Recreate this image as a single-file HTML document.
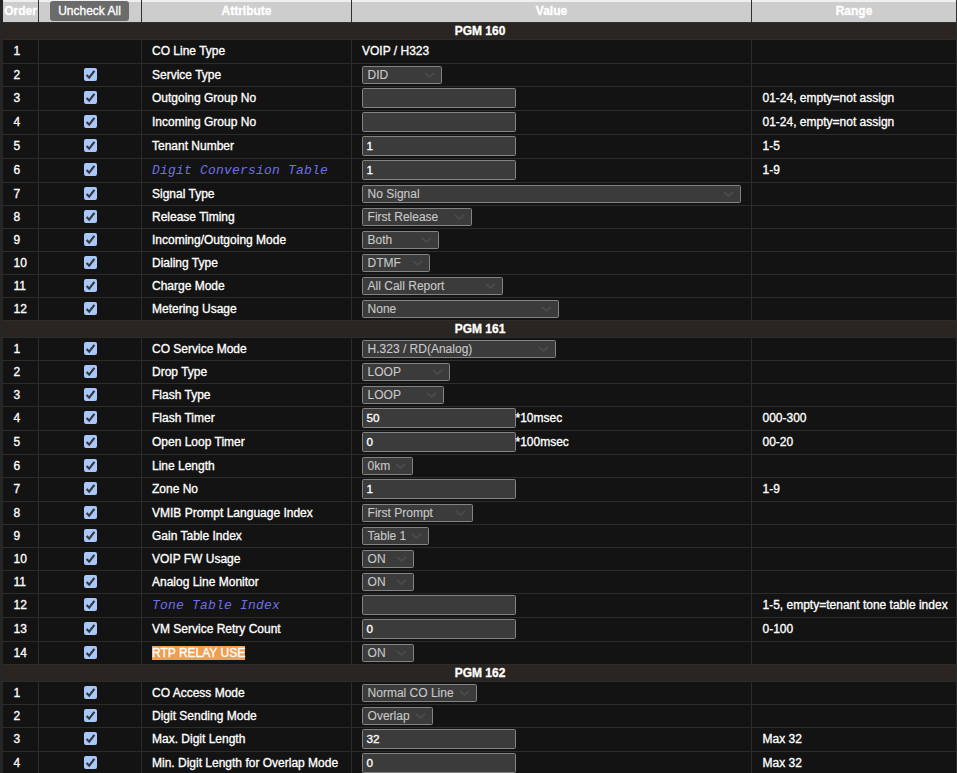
<!DOCTYPE html>
<html><head><meta charset="utf-8"><title>PGM</title>
<style>
html,body{margin:0;padding:0;background:#262626;}
body{width:957px;height:773px;overflow:hidden;position:relative;font-family:"Liberation Sans",sans-serif;font-size:12px;color:#fff;}
table{position:absolute;left:3px;top:0;width:953px;border-collapse:collapse;table-layout:fixed;}
td,th{border:1px solid #2c2c2c;padding:0;overflow:hidden;white-space:nowrap;}
thead th{background:#cdcdcd;color:#fff;font-weight:bold;font-size:12px;height:21px;border-color:#303030;border-top:1px solid #f0f0f0;box-shadow:inset 0 1px 0 #f0f0f0;text-align:center;}
tr.sec td{background:#2a2520;height:16px;text-align:center;font-weight:bold;font-size:12px;border-color:#2c2c2c;line-height:16px;}
tbody td{background:#131313;}
td.o{padding-left:9.5px;}
td.c{text-align:center;}
td.a{padding-left:10px;}
td.v{padding-left:10px;}
td.g{padding-left:10.5px;}
.cb{display:inline-block;width:13px;height:13px;background:#a8c7fa;border-radius:2px;vertical-align:middle;position:relative;top:-1px;}
.cb svg{display:block;}
.btn{display:inline-block;background:#6b6b6b;color:#fff;border-radius:3px;width:79px;height:20px;line-height:20px;position:relative;top:-1px;left:-0.5px;font-size:12px;font-weight:normal;text-align:center;vertical-align:middle;}
.sel{display:inline-block;box-sizing:border-box;height:18px;border:1px solid #838383;border-radius:1.5px;background:#3b3b3b;color:#c8c8c8;vertical-align:middle;position:relative;line-height:16px;font-size:12px;}
.sel .st{padding-left:4.6px;}
.sel .chev{position:absolute;right:6px;top:5px;}
.inp{display:inline-block;box-sizing:border-box;width:154px;height:20px;border:1px solid #838383;border-radius:1.5px;background:#3b3b3b;color:#fff;vertical-align:middle;line-height:18px;padding-left:3.6px;font-size:11.7px;}
.suf{vertical-align:middle;padding-left:1px;}
.lnk{font-family:"Liberation Mono",monospace;font-style:italic;color:#6f6fe8;font-size:13px;letter-spacing:0.2px;}
.hl{background:#f09e50;color:#fff;}
tr.rinp td, tr.rtext td{}
tr.rinp td > *, tr.rtext td > *{position:relative;top:-1px;}
tr.rinp td .cb, tr.rtext td .cb{top:-2px;}
tbody td, thead th{-webkit-text-stroke:0.32px #fff;}
.sel{-webkit-text-stroke:0.12px #c8c8c8;}
.lnk{-webkit-text-stroke:0;}
thead th span.ht{position:relative;top:-1px;}
thead th:first-child{border-left-color:#cdcdcd;}
tbody td:first-child{border-left-color:#131313;}
tr.sec td:first-child{border-left-color:#2a2520;}
thead th:first-child span.ht{left:-0.5px;}
tr.rinp td > .lnk{top:0px;}
.suf{padding-left:0;margin-left:-0.5px;}
</style></head><body>
<table>
<colgroup><col style="width:35px"><col style="width:103px"><col style="width:210px"><col style="width:400px"><col style="width:205px"></colgroup>
<thead><tr><th><span class="ht">Order</span></th><th><span class="btn">Uncheck All</span></th><th><span class="ht">Attribute</span></th><th><span class="ht">Value</span></th><th><span class="ht">Range</span></th></tr></thead>
<tbody>
<tr class="sec"><td colspan="5">PGM 160</td></tr>
<tr class="rtext" style="height:24px"><td class="o"><span>1</span></td><td class="c"></td><td class="a"><span>CO Line Type</span></td><td class="v"><span class="vt">VOIP / H323</span></td><td class="g"><span></span></td></tr>
<tr class="rsel" style="height:23px"><td class="o"><span>2</span></td><td class="c"><span class="cb"><svg viewBox="0 0 13 13" width="13" height="13"><path d="M2.6 7.0 L5.2 9.7 L10.4 2.8" fill="none" stroke="#363636" stroke-width="2.1"/></svg></span></td><td class="a"><span>Service Type</span></td><td class="v"><span class="sel" style="width:80px"><span class="st">DID</span><svg class="chev" viewBox="0 0 11 6" width="11" height="6"><path d="M1 1 L5.5 5 L10 1" fill="none" stroke="#4b4b4b" stroke-width="1.7"/></svg></span></td><td class="g"><span></span></td></tr>
<tr class="rinp" style="height:24px"><td class="o"><span>3</span></td><td class="c"><span class="cb"><svg viewBox="0 0 13 13" width="13" height="13"><path d="M2.6 7.0 L5.2 9.7 L10.4 2.8" fill="none" stroke="#363636" stroke-width="2.1"/></svg></span></td><td class="a"><span>Outgoing Group No</span></td><td class="v"><span class="inp"></span></td><td class="g"><span>01-24, empty=not assign</span></td></tr>
<tr class="rinp" style="height:24px"><td class="o"><span>4</span></td><td class="c"><span class="cb"><svg viewBox="0 0 13 13" width="13" height="13"><path d="M2.6 7.0 L5.2 9.7 L10.4 2.8" fill="none" stroke="#363636" stroke-width="2.1"/></svg></span></td><td class="a"><span>Incoming Group No</span></td><td class="v"><span class="inp"></span></td><td class="g"><span>01-24, empty=not assign</span></td></tr>
<tr class="rinp" style="height:24px"><td class="o"><span>5</span></td><td class="c"><span class="cb"><svg viewBox="0 0 13 13" width="13" height="13"><path d="M2.6 7.0 L5.2 9.7 L10.4 2.8" fill="none" stroke="#363636" stroke-width="2.1"/></svg></span></td><td class="a"><span>Tenant Number</span></td><td class="v"><span class="inp">1</span></td><td class="g"><span>1-5</span></td></tr>
<tr class="rinp" style="height:24px"><td class="o"><span>6</span></td><td class="c"><span class="cb"><svg viewBox="0 0 13 13" width="13" height="13"><path d="M2.6 7.0 L5.2 9.7 L10.4 2.8" fill="none" stroke="#363636" stroke-width="2.1"/></svg></span></td><td class="a"><span class="lnk">Digit Conversion Table</span></td><td class="v"><span class="inp">1</span></td><td class="g"><span>1-9</span></td></tr>
<tr class="rsel" style="height:23px"><td class="o"><span>7</span></td><td class="c"><span class="cb"><svg viewBox="0 0 13 13" width="13" height="13"><path d="M2.6 7.0 L5.2 9.7 L10.4 2.8" fill="none" stroke="#363636" stroke-width="2.1"/></svg></span></td><td class="a"><span>Signal Type</span></td><td class="v"><span class="sel" style="width:379px"><span class="st">No Signal</span><svg class="chev" viewBox="0 0 11 6" width="11" height="6"><path d="M1 1 L5.5 5 L10 1" fill="none" stroke="#4b4b4b" stroke-width="1.7"/></svg></span></td><td class="g"><span></span></td></tr>
<tr class="rsel" style="height:23px"><td class="o"><span>8</span></td><td class="c"><span class="cb"><svg viewBox="0 0 13 13" width="13" height="13"><path d="M2.6 7.0 L5.2 9.7 L10.4 2.8" fill="none" stroke="#363636" stroke-width="2.1"/></svg></span></td><td class="a"><span>Release Timing</span></td><td class="v"><span class="sel" style="width:110px"><span class="st">First Release</span><svg class="chev" viewBox="0 0 11 6" width="11" height="6"><path d="M1 1 L5.5 5 L10 1" fill="none" stroke="#4b4b4b" stroke-width="1.7"/></svg></span></td><td class="g"><span></span></td></tr>
<tr class="rsel" style="height:23px"><td class="o"><span>9</span></td><td class="c"><span class="cb"><svg viewBox="0 0 13 13" width="13" height="13"><path d="M2.6 7.0 L5.2 9.7 L10.4 2.8" fill="none" stroke="#363636" stroke-width="2.1"/></svg></span></td><td class="a"><span>Incoming/Outgoing Mode</span></td><td class="v"><span class="sel" style="width:77px"><span class="st">Both</span><svg class="chev" viewBox="0 0 11 6" width="11" height="6"><path d="M1 1 L5.5 5 L10 1" fill="none" stroke="#4b4b4b" stroke-width="1.7"/></svg></span></td><td class="g"><span></span></td></tr>
<tr class="rsel" style="height:23px"><td class="o"><span>10</span></td><td class="c"><span class="cb"><svg viewBox="0 0 13 13" width="13" height="13"><path d="M2.6 7.0 L5.2 9.7 L10.4 2.8" fill="none" stroke="#363636" stroke-width="2.1"/></svg></span></td><td class="a"><span>Dialing Type</span></td><td class="v"><span class="sel" style="width:68px"><span class="st">DTMF</span><svg class="chev" viewBox="0 0 11 6" width="11" height="6"><path d="M1 1 L5.5 5 L10 1" fill="none" stroke="#4b4b4b" stroke-width="1.7"/></svg></span></td><td class="g"><span></span></td></tr>
<tr class="rsel" style="height:23px"><td class="o"><span>11</span></td><td class="c"><span class="cb"><svg viewBox="0 0 13 13" width="13" height="13"><path d="M2.6 7.0 L5.2 9.7 L10.4 2.8" fill="none" stroke="#363636" stroke-width="2.1"/></svg></span></td><td class="a"><span>Charge Mode</span></td><td class="v"><span class="sel" style="width:141px"><span class="st">All Call Report</span><svg class="chev" viewBox="0 0 11 6" width="11" height="6"><path d="M1 1 L5.5 5 L10 1" fill="none" stroke="#4b4b4b" stroke-width="1.7"/></svg></span></td><td class="g"><span></span></td></tr>
<tr class="rsel" style="height:23px"><td class="o"><span>12</span></td><td class="c"><span class="cb"><svg viewBox="0 0 13 13" width="13" height="13"><path d="M2.6 7.0 L5.2 9.7 L10.4 2.8" fill="none" stroke="#363636" stroke-width="2.1"/></svg></span></td><td class="a"><span>Metering Usage</span></td><td class="v"><span class="sel" style="width:197px"><span class="st">None</span><svg class="chev" viewBox="0 0 11 6" width="11" height="6"><path d="M1 1 L5.5 5 L10 1" fill="none" stroke="#4b4b4b" stroke-width="1.7"/></svg></span></td><td class="g"><span></span></td></tr>
<tr class="sec"><td colspan="5">PGM 161</td></tr>
<tr class="rsel" style="height:23px"><td class="o"><span>1</span></td><td class="c"><span class="cb"><svg viewBox="0 0 13 13" width="13" height="13"><path d="M2.6 7.0 L5.2 9.7 L10.4 2.8" fill="none" stroke="#363636" stroke-width="2.1"/></svg></span></td><td class="a"><span>CO Service Mode</span></td><td class="v"><span class="sel" style="width:194px"><span class="st">H.323 / RD(Analog)</span><svg class="chev" viewBox="0 0 11 6" width="11" height="6"><path d="M1 1 L5.5 5 L10 1" fill="none" stroke="#4b4b4b" stroke-width="1.7"/></svg></span></td><td class="g"><span></span></td></tr>
<tr class="rsel" style="height:23px"><td class="o"><span>2</span></td><td class="c"><span class="cb"><svg viewBox="0 0 13 13" width="13" height="13"><path d="M2.6 7.0 L5.2 9.7 L10.4 2.8" fill="none" stroke="#363636" stroke-width="2.1"/></svg></span></td><td class="a"><span>Drop Type</span></td><td class="v"><span class="sel" style="width:88px"><span class="st">LOOP</span><svg class="chev" viewBox="0 0 11 6" width="11" height="6"><path d="M1 1 L5.5 5 L10 1" fill="none" stroke="#4b4b4b" stroke-width="1.7"/></svg></span></td><td class="g"><span></span></td></tr>
<tr class="rsel" style="height:23px"><td class="o"><span>3</span></td><td class="c"><span class="cb"><svg viewBox="0 0 13 13" width="13" height="13"><path d="M2.6 7.0 L5.2 9.7 L10.4 2.8" fill="none" stroke="#363636" stroke-width="2.1"/></svg></span></td><td class="a"><span>Flash Type</span></td><td class="v"><span class="sel" style="width:82px"><span class="st">LOOP</span><svg class="chev" viewBox="0 0 11 6" width="11" height="6"><path d="M1 1 L5.5 5 L10 1" fill="none" stroke="#4b4b4b" stroke-width="1.7"/></svg></span></td><td class="g"><span></span></td></tr>
<tr class="rinp" style="height:24px"><td class="o"><span>4</span></td><td class="c"><span class="cb"><svg viewBox="0 0 13 13" width="13" height="13"><path d="M2.6 7.0 L5.2 9.7 L10.4 2.8" fill="none" stroke="#363636" stroke-width="2.1"/></svg></span></td><td class="a"><span>Flash Timer</span></td><td class="v"><span class="inp">50</span><span class="suf">*10msec</span></td><td class="g"><span>000-300</span></td></tr>
<tr class="rinp" style="height:24px"><td class="o"><span>5</span></td><td class="c"><span class="cb"><svg viewBox="0 0 13 13" width="13" height="13"><path d="M2.6 7.0 L5.2 9.7 L10.4 2.8" fill="none" stroke="#363636" stroke-width="2.1"/></svg></span></td><td class="a"><span>Open Loop Timer</span></td><td class="v"><span class="inp">0</span><span class="suf">*100msec</span></td><td class="g"><span>00-20</span></td></tr>
<tr class="rsel" style="height:23px"><td class="o"><span>6</span></td><td class="c"><span class="cb"><svg viewBox="0 0 13 13" width="13" height="13"><path d="M2.6 7.0 L5.2 9.7 L10.4 2.8" fill="none" stroke="#363636" stroke-width="2.1"/></svg></span></td><td class="a"><span>Line Length</span></td><td class="v"><span class="sel" style="width:51px"><span class="st">0km</span><svg class="chev" viewBox="0 0 11 6" width="11" height="6"><path d="M1 1 L5.5 5 L10 1" fill="none" stroke="#4b4b4b" stroke-width="1.7"/></svg></span></td><td class="g"><span></span></td></tr>
<tr class="rinp" style="height:24px"><td class="o"><span>7</span></td><td class="c"><span class="cb"><svg viewBox="0 0 13 13" width="13" height="13"><path d="M2.6 7.0 L5.2 9.7 L10.4 2.8" fill="none" stroke="#363636" stroke-width="2.1"/></svg></span></td><td class="a"><span>Zone No</span></td><td class="v"><span class="inp">1</span></td><td class="g"><span>1-9</span></td></tr>
<tr class="rsel" style="height:23px"><td class="o"><span>8</span></td><td class="c"><span class="cb"><svg viewBox="0 0 13 13" width="13" height="13"><path d="M2.6 7.0 L5.2 9.7 L10.4 2.8" fill="none" stroke="#363636" stroke-width="2.1"/></svg></span></td><td class="a"><span>VMIB Prompt Language Index</span></td><td class="v"><span class="sel" style="width:111px"><span class="st">First Prompt</span><svg class="chev" viewBox="0 0 11 6" width="11" height="6"><path d="M1 1 L5.5 5 L10 1" fill="none" stroke="#4b4b4b" stroke-width="1.7"/></svg></span></td><td class="g"><span></span></td></tr>
<tr class="rsel" style="height:23px"><td class="o"><span>9</span></td><td class="c"><span class="cb"><svg viewBox="0 0 13 13" width="13" height="13"><path d="M2.6 7.0 L5.2 9.7 L10.4 2.8" fill="none" stroke="#363636" stroke-width="2.1"/></svg></span></td><td class="a"><span>Gain Table Index</span></td><td class="v"><span class="sel" style="width:67px"><span class="st">Table 1</span><svg class="chev" viewBox="0 0 11 6" width="11" height="6"><path d="M1 1 L5.5 5 L10 1" fill="none" stroke="#4b4b4b" stroke-width="1.7"/></svg></span></td><td class="g"><span></span></td></tr>
<tr class="rsel" style="height:23px"><td class="o"><span>10</span></td><td class="c"><span class="cb"><svg viewBox="0 0 13 13" width="13" height="13"><path d="M2.6 7.0 L5.2 9.7 L10.4 2.8" fill="none" stroke="#363636" stroke-width="2.1"/></svg></span></td><td class="a"><span>VOIP FW Usage</span></td><td class="v"><span class="sel" style="width:52px"><span class="st">ON</span><svg class="chev" viewBox="0 0 11 6" width="11" height="6"><path d="M1 1 L5.5 5 L10 1" fill="none" stroke="#4b4b4b" stroke-width="1.7"/></svg></span></td><td class="g"><span></span></td></tr>
<tr class="rsel" style="height:23px"><td class="o"><span>11</span></td><td class="c"><span class="cb"><svg viewBox="0 0 13 13" width="13" height="13"><path d="M2.6 7.0 L5.2 9.7 L10.4 2.8" fill="none" stroke="#363636" stroke-width="2.1"/></svg></span></td><td class="a"><span>Analog Line Monitor</span></td><td class="v"><span class="sel" style="width:52px"><span class="st">ON</span><svg class="chev" viewBox="0 0 11 6" width="11" height="6"><path d="M1 1 L5.5 5 L10 1" fill="none" stroke="#4b4b4b" stroke-width="1.7"/></svg></span></td><td class="g"><span></span></td></tr>
<tr class="rinp" style="height:24px"><td class="o"><span>12</span></td><td class="c"><span class="cb"><svg viewBox="0 0 13 13" width="13" height="13"><path d="M2.6 7.0 L5.2 9.7 L10.4 2.8" fill="none" stroke="#363636" stroke-width="2.1"/></svg></span></td><td class="a"><span class="lnk">Tone Table Index</span></td><td class="v"><span class="inp"></span></td><td class="g"><span>1-5, empty=tenant tone table index</span></td></tr>
<tr class="rinp" style="height:24px"><td class="o"><span>13</span></td><td class="c"><span class="cb"><svg viewBox="0 0 13 13" width="13" height="13"><path d="M2.6 7.0 L5.2 9.7 L10.4 2.8" fill="none" stroke="#363636" stroke-width="2.1"/></svg></span></td><td class="a"><span>VM Service Retry Count</span></td><td class="v"><span class="inp">0</span></td><td class="g"><span>0-100</span></td></tr>
<tr class="rsel" style="height:23px"><td class="o"><span>14</span></td><td class="c"><span class="cb"><svg viewBox="0 0 13 13" width="13" height="13"><path d="M2.6 7.0 L5.2 9.7 L10.4 2.8" fill="none" stroke="#363636" stroke-width="2.1"/></svg></span></td><td class="a"><span class="hl">RTP RELAY USE</span></td><td class="v"><span class="sel" style="width:52px"><span class="st">ON</span><svg class="chev" viewBox="0 0 11 6" width="11" height="6"><path d="M1 1 L5.5 5 L10 1" fill="none" stroke="#4b4b4b" stroke-width="1.7"/></svg></span></td><td class="g"><span></span></td></tr>
<tr class="sec"><td colspan="5">PGM 162</td></tr>
<tr class="rsel" style="height:23px"><td class="o"><span>1</span></td><td class="c"><span class="cb"><svg viewBox="0 0 13 13" width="13" height="13"><path d="M2.6 7.0 L5.2 9.7 L10.4 2.8" fill="none" stroke="#363636" stroke-width="2.1"/></svg></span></td><td class="a"><span>CO Access Mode</span></td><td class="v"><span class="sel" style="width:115px"><span class="st">Normal CO Line</span><svg class="chev" viewBox="0 0 11 6" width="11" height="6"><path d="M1 1 L5.5 5 L10 1" fill="none" stroke="#4b4b4b" stroke-width="1.7"/></svg></span></td><td class="g"><span></span></td></tr>
<tr class="rsel" style="height:23px"><td class="o"><span>2</span></td><td class="c"><span class="cb"><svg viewBox="0 0 13 13" width="13" height="13"><path d="M2.6 7.0 L5.2 9.7 L10.4 2.8" fill="none" stroke="#363636" stroke-width="2.1"/></svg></span></td><td class="a"><span>Digit Sending Mode</span></td><td class="v"><span class="sel" style="width:71px"><span class="st">Overlap</span><svg class="chev" viewBox="0 0 11 6" width="11" height="6"><path d="M1 1 L5.5 5 L10 1" fill="none" stroke="#4b4b4b" stroke-width="1.7"/></svg></span></td><td class="g"><span></span></td></tr>
<tr class="rinp" style="height:24px"><td class="o"><span>3</span></td><td class="c"><span class="cb"><svg viewBox="0 0 13 13" width="13" height="13"><path d="M2.6 7.0 L5.2 9.7 L10.4 2.8" fill="none" stroke="#363636" stroke-width="2.1"/></svg></span></td><td class="a"><span>Max. Digit Length</span></td><td class="v"><span class="inp">32</span></td><td class="g"><span>Max 32</span></td></tr>
<tr class="rinp" style="height:24px"><td class="o"><span>4</span></td><td class="c"><span class="cb"><svg viewBox="0 0 13 13" width="13" height="13"><path d="M2.6 7.0 L5.2 9.7 L10.4 2.8" fill="none" stroke="#363636" stroke-width="2.1"/></svg></span></td><td class="a"><span>Min. Digit Length for Overlap Mode</span></td><td class="v"><span class="inp">0</span></td><td class="g"><span>Max 32</span></td></tr>

</tbody></table>
</body></html>
